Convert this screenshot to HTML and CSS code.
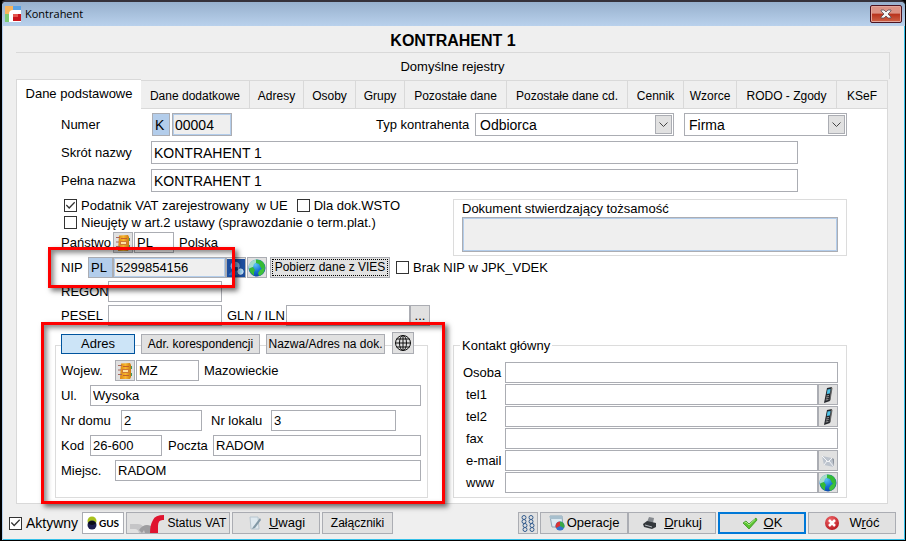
FILE: index.html
```html
<!DOCTYPE html>
<html lang="pl">
<head>
<meta charset="utf-8">
<title>Kontrahent</title>
<link rel="stylesheet" href="styles.css">
</head>
<body>
<svg class="defs" aria-hidden="true">
  <defs>
    <radialGradient id="sea" cx=".4" cy=".3" r=".8"><stop offset="0" stop-color="#5bc4f5"/><stop offset=".5" stop-color="#1673d8"/><stop offset="1" stop-color="#0a3a9c"/></radialGradient>
    <linearGradient id="book" x2="1" y2="0"><stop offset="0" stop-color="#d98412"/><stop offset=".5" stop-color="#f8b62e"/><stop offset="1" stop-color="#c97a12"/></linearGradient>
    <radialGradient id="red" cx=".4" cy=".3" r=".8"><stop offset="0" stop-color="#f0696b"/><stop offset="1" stop-color="#b30f18"/></radialGradient>
    <symbol id="globe" viewBox="0 0 18 18">
      <circle cx="9" cy="9" r="8.5" fill="url(#sea)"/>
      <path d="M.6 9Q.6 2 8 .6L9 3 6 5 5 8 2 10Z" fill="#a5dccb"/>
      <path d="M8 .6Q15 .6 17 7L15.500 11 13 9 11 5 8 4ZM2 9L5 8 7 11 6 13 6 16.500Q2 14 1 10Z" fill="#35bb35"/>
      <path d="M12 11L17 8Q17 15 11 17L10 14Z" fill="#3fc23a"/>
    </symbol>
    <symbol id="address-book" viewBox="0 0 16 18">
      <path d="M4 1.500L13 1 14 3V15L13 17H3Z" fill="url(#book)"/>
      <path d="M14.500 4V7M14.500 11V14" stroke="#3b9b62"/>
      <path d="M1 3.500H5M1 8H4M1 12.500H5" stroke="#a8665c"/>
      <rect x="5.500" y="7.500" width="6" height="3" fill="#ffe3a0" stroke="#cf7a35"/>
      <path d="M6 4.500H12M6 13.500H12" stroke="#c2602c"/>
    </symbol>
    <symbol id="phone" viewBox="0 0 14 18">
      <path d="M6 2L11 1 9 15 3 17Z" fill="#23262b"/>
      <path d="M10 1L11.500 2 9.500 14 8.500 15Z" fill="#666"/>
      <path d="M6.500 3.500L9.500 3 8.800 7.500 5.800 8Z" fill="#4ec3e8"/>
      <path d="M5.500 10L8 9.500M5 12L7.700 11.500M4.700 14L7.400 13.500" stroke="#9a9a9a"/>
    </symbol>
  </defs>
</svg>
<div class="window">
  <header class="titlebar">
    <svg class="logo" viewBox="0 0 16 16" aria-hidden="true"><path d="M0 0H8V8H0Z" fill="#f9b45c"/><path d="M8 0H16V5H8Z" fill="#5aa2e4"/><path d="M0 8H5V16H0Z" fill="#7ccb72"/><path d="M4 16V8Q4 4 8 4H16V7H9Q7 7 7 9V16Z" fill="#fff"/><path d="M7 7H16V16H7Z" fill="#fff"/><path d="M8 8H16V15H8Z" fill="#c9151b"/><path d="M8 8H13V11H8Z" fill="#e4564e"/></svg>
    <span class="window-name">Kontrahent</span>
    <button class="close" type="button" aria-label="Zamknij"><svg viewBox="0 0 12 10"><path d="M1 1H4L6 3 8 1H11V2L8 5 11 8V9H8L6 7 4 9H1V8L4 5 1 2Z" fill="#f5f5f5" stroke="#5c4b53" stroke-width=".8"/></svg></button>
  </header>
  <main class="content">
    <h1>KONTRAHENT 1</h1>
    <p class="registers">Domyślne rejestry</p>
    <nav class="tabs">
      <button type="button" class="tab active">Dane podstawowe</button>
      <button type="button" class="tab">Dane dodatkowe</button>
      <button type="button" class="tab">Adresy</button>
      <button type="button" class="tab">Osoby</button>
      <button type="button" class="tab">Grupy</button>
      <button type="button" class="tab">Pozostałe dane</button>
      <button type="button" class="tab">Pozostałe dane cd.</button>
      <button type="button" class="tab">Cennik</button>
      <button type="button" class="tab">Wzorce</button>
      <button type="button" class="tab">RODO - Zgody</button>
      <button type="button" class="tab">KSeF</button>
    </nav>
    <form class="panel">
      <div class="identity">
        <div class="row tall">
          <label class="wide-label" for="number">Numer</label>
          <input class="prefix letter" value="K" aria-label="Seria" readonly>
          <input class="locked number" id="number" value="00004" readonly>
          <label class="type-label" for="type">Typ kontrahenta</label>
          <span class="combo type"><select id="type"><option>Odbiorca</option></select><span class="arrow"><svg viewBox="0 0 9 6"><path d="M.5 .5L4.500 4.500 8.500 .5"/></svg></span></span>
          <span class="combo form"><select aria-label="Forma"><option>Firma</option></select><span class="arrow"><svg viewBox="0 0 9 6"><path d="M.5 .5L4.500 4.500 8.500 .5"/></svg></span></span>
        </div>
        <div class="row tall named"><label class="wide-label" for="short">Skrót nazwy</label><input class="grow" id="short" value="KONTRAHENT 1"></div>
        <div class="row tall named"><label class="wide-label" for="full">Pełna nazwa</label><input class="grow" id="full" value="KONTRAHENT 1"></div>
      </div>
      <div class="middle">
        <div class="flags">
          <div class="checks"><label class="check"><input type="checkbox" checked>Podatnik VAT zarejestrowany &nbsp;w UE</label><label class="check"><input type="checkbox">Dla dok.WSTO</label></div>
          <div class="checks"><label class="check"><input type="checkbox">Nieujęty w art.2 ustawy (sprawozdanie o term.plat.)</label></div>
          <div class="row country">
            <label class="country-label" for="country">Państwo</label>
            <button class="icon" type="button" aria-label="Wybierz państwo"><svg><use href="#address-book"/></svg></button>
            <input class="country-code" id="country" value="PL"><span>Polska</span>
          </div>
        </div>
        <div class="document"><label for="document">Dokument stwierdzający tożsamość</label><input class="locked" id="document" readonly></div>
      </div>
      <div class="codes">
        <div class="row nip">
          <label class="nip-label" for="nip">NIP</label>
          <input class="prefix nip-country" value="PL" aria-label="Prefiks NIP" readonly><input class="locked nip-number" id="nip" value="5299854156" readonly>
          <button class="icon" type="button" aria-label="Sprawdź"><svg viewBox="0 0 20 20"><path d="M0 0H20V20H0Z" fill="#1d4f9f"/><path d="M4 8Q4 3 9 3T14 8L13 11H5Z" fill="#89aede"/><path d="M6 9H12V13H6Z" fill="#173b7c"/><circle cx="15" cy="14" r="3" fill="#9ed4f3" stroke="#dceaf6"/><path d="M2 17L6 13H11L12 18H2Z" fill="#3771bd"/></svg></button>
          <button class="icon web" type="button" aria-label="Strona"><svg><use href="#globe"/></svg></button>
          <button class="vies" type="button"><span>Pobierz dane z VIES</span></button>
          <label class="check"><input type="checkbox">Brak NIP w JPK_VDEK</label>
          <span class="highlight highlight-nip"></span>
        </div>
        <div class="row"><label class="code-label" for="regon">REGON</label><input class="code" id="regon"></div>
        <div class="row"><label class="code-label" for="pesel">PESEL</label><input class="code" id="pesel"><label class="gln-label" for="gln">GLN / ILN</label><input class="gln" id="gln"><button class="icon dots" type="button">...</button></div>
      </div>
      <div class="groups">
        <section class="group address">
          <div class="address-tabs">
            <button class="current" type="button">Adres</button><button class="mail-tab" type="button">Adr. korespondencji</button><button class="name-tab" type="button">Nazwa/Adres na dok.</button>
            <button class="icon map" type="button" aria-label="Mapa"><svg viewBox="0 0 18 18" fill="none" stroke="#111"><circle cx="9" cy="9" r="7.500"/><ellipse cx="9" cy="9" rx="3.500" ry="7.500"/><path d="M9 1V17M1 9H17M2.500 5H15.500M2.500 13H15.500"/></svg></button>
          </div>
          <div class="row"><label class="voiv-label" for="voiv">Wojew.</label><button class="icon" type="button" aria-label="Wybierz województwo"><svg><use href="#address-book"/></svg></button><input class="voiv" id="voiv" value="MZ"><span>Mazowieckie</span></div>
          <div class="row"><label class="street-label" for="street">Ul.</label><input class="grow" id="street" value="Wysoka"></div>
          <div class="row"><label class="house-label" for="house">Nr domu</label><input class="house" id="house" value="2"><label class="flat-label" for="flat">Nr lokalu</label><input class="flat" id="flat" value="3"></div>
          <div class="row"><label class="street-label" for="zip">Kod</label><input class="zip" id="zip" value="26-600"><label class="post-label" for="post">Poczta</label><input class="grow" id="post" value="RADOM"></div>
          <div class="row"><label class="voiv-label" for="city">Miejsc.</label><input class="grow" id="city" value="RADOM"></div>
          <span class="highlight highlight-address"></span>
        </section>
        <fieldset class="group contact">
          <legend>Kontakt główny</legend>
          <div class="row"><label for="person">Osoba</label><input class="grow" id="person"></div>
          <div class="row"><label for="tel1">tel1</label><input class="grow" id="tel1"><button class="icon" type="button" aria-label="Zadzwoń tel1"><svg><use href="#phone"/></svg></button></div>
          <div class="row"><label for="tel2">tel2</label><input class="grow" id="tel2"><button class="icon" type="button" aria-label="Zadzwoń tel2"><svg><use href="#phone"/></svg></button></div>
          <div class="row"><label for="fax">fax</label><input class="grow" id="fax"></div>
          <div class="row"><label for="email">e-mail</label><input class="grow" id="email"><button class="icon" type="button" aria-label="Wyślij e-mail"><svg viewBox="0 0 18 18"><path d="M3 4L13 6 15 15 5 13Z" fill="#bcc3cd"/><path d="M3 4L9 10 13 6M5 13L8 9M15 15L10 9" fill="none" stroke="#f4f5f7"/><path d="M13 6L15 7V15Z" fill="#8e959f"/></svg></button></div>
          <div class="row"><label for="www">www</label><input class="grow" id="www"><button class="icon" type="button" aria-label="Otwórz stronę"><svg><use href="#globe"/></svg></button></div>
        </fieldset>
      </div>
    </form>
  </main>
  <footer class="actions">
    <label class="check active-flag"><input type="checkbox" checked>Aktywny</label>
    <button class="gus" type="button"><svg viewBox="0 0 10 14" aria-hidden="true"><circle cx="5" cy="5" r="4.500" fill="#a9c11c"/><circle cx="5" cy="9" r="4.500" fill="#1c1d4d"/><path d="M1 7Q5 3 9 7 5 11 1 7" fill="#0b0c16"/></svg>GUS</button>
    <button class="status" type="button"><svg viewBox="0 0 34 19" aria-hidden="true"><path d="M0 10H8Q14 10 16 19H9Q8 15 5 15H0Z" fill="#c5c5c7"/><path d="M9 16Q14 9 21 12V19H15L14 16 12 19Z" fill="#9d9da0"/><path d="M20 19Q20 11 23 6 25 1 34 1V6Q28 5 28 12V19Z" fill="#e0142f"/></svg>Status VAT</button>
    <button class="standard" type="button"><svg viewBox="0 0 16 16" aria-hidden="true"><path d="M3 2H11L12 14H4Z" fill="#dfe9ef" stroke="#b8c6cf"/><path d="M13 3L6 12 5 14 8 13 14 5Z" fill="#8299a6"/></svg><span><u>U</u>wagi</span></button>
    <button class="attachments" type="button">Załączniki</button>
    <span class="spacer"></span>
    <button class="icon links" type="button" aria-label="Powiązania"><svg viewBox="0 0 18 18" fill="none" stroke="#335c8e"><circle cx="5" cy="3.500" r="2"/><circle cx="5" cy="7.500" r="2"/><circle cx="12" cy="3.500" r="2"/><circle cx="12" cy="7.500" r="2"/><circle cx="6" cy="11.500" r="2"/><circle cx="6" cy="15.500" r="2"/><circle cx="13" cy="11.500" r="2"/><circle cx="13" cy="15.500" r="2"/></svg></button>
    <div class="joined">
      <button class="standard" type="button"><svg viewBox="0 0 16 16" aria-hidden="true"><path d="M1 1H13L14 12H3Z" fill="#dce9f1" stroke="#8da8b8"/><path d="M1 1H13V4H1Z" fill="#a7bfcd"/><circle cx="11" cy="11" r="4.500" fill="#3574cc"/><path d="M11 11V6.500A4.500 4.500 0 0 0 7 13Z" fill="#d93434"/><path d="M11 11V6.500A4.500 4.500 0 0 1 15 13Z" fill="#39a844"/></svg>Operacje</button><button class="standard print" type="button"><svg viewBox="0 0 16 16" aria-hidden="true"><path d="M7 2L12 3 11 8 5 7Z" fill="#85898e"/><path d="M1 9L5 6 14 8 14 12 10 14 2 12Z" fill="#34383c"/><path d="M3 10L10 12" stroke="#b6bbc0"/></svg><span><u>D</u>rukuj</span></button>
    </div>
    <button class="standard ok" type="button"><svg viewBox="0 0 16 16" aria-hidden="true"><path d="M1 8L4 6 7 9 14 3 15 5 7 14Z" fill="#5ac32f" stroke="#389321" stroke-width=".8"/><path d="M2.500 8L4 7 7 10 13 4.500" fill="none" stroke="#a8e985"/></svg><span><u>O</u>K</span></button>
    <button class="standard back" type="button"><svg viewBox="0 0 16 16" aria-hidden="true"><circle cx="8" cy="8" r="7" fill="url(#red)"/><path d="M5 5L11 11M11 5L5 11" stroke="#fff" stroke-width="2.500"/></svg><span>W<u>r</u>óć</span></button>
  </footer>
</div>
</body>
</html>
```
FILE: styles.css
```css
* { box-sizing: border-box; }
body { margin: 0; background: #000; font: 13px/16px "Liberation Sans", Arial, sans-serif; color: #000; }
.defs { position: absolute; width: 0; height: 0; }
svg { display: block; flex: none; }
input, select, button { font: inherit; color: inherit; margin: 0; border-radius: 0; min-width: 0; }
.window {
  min-height: 100vh; display: flex; flex-direction: column;
  border: 1px solid #000; border-width: 2px 1px 1px 2px; border-top-color: #35313a;
  border-radius: 6px 6px 0 0; background: #efefef;
  box-shadow: inset 1px 0 #b4cfec, inset -1px -1px #35c0e8;
}
.titlebar {
  height: 24px; display: flex; align-items: center; gap: 4px; padding: 0 3px 0 3px;
  background: linear-gradient(#97b0cd, #b9d1ec); border-radius: 4px 4px 0 0;
  font: 11px/16px "Open Sans", "Noto Sans", sans-serif;
}
.logo { width: 16px; height: 16px; }
.window-name { flex: 1; }
.close {
  width: 32px; height: 18px; padding: 0; display: grid; place-items: center;
  border: 1px solid #4c1320; border-radius: 2px; box-shadow: inset 0 0 0 1px #e3a69b;
  background: linear-gradient(#dc9284 45%, #b8321c 50%, #ce6347);
}
.close svg { width: 12px; height: 10px; }

.content { padding: 0 15px 0 14px; }
h1 { margin: 0; height: 26px; font-size: 16px; line-height: 29px; text-align: center; }
.registers { margin: 0; height: 27px; border-top: 1px solid #d9d9d9; border-right: 1px solid #d9d9d9; text-align: center; line-height: 28px; }
.tabs {
  display: grid; margin-right: 2px; align-items: end;
  grid-template-columns: 125fr 109fr 54fr 52fr 49fr 102fr 121fr 56fr 53fr 100fr 51fr;
}
.tab {
  height: 28px; padding: 2px 0 0; white-space: nowrap; background: #efefef; text-align: center;
  border: solid #d9d9d9; border-width: 1px 1px 0 0; font-size: 12px;
}
.tab.active {
  position: relative; z-index: 1; height: 30px; margin-bottom: -1px; padding: 0 0 2px;
  background: #fff; border-width: 1px 0 0 1px; font-size: 13px;
}
.panel { margin-right: 2px; padding: 4px 40px 5px 38px; background: #fff; border: 1px solid #d9d9d9; }

.row { display: flex; align-items: center; height: 21px; white-space: nowrap; }
.row > * { flex: none; }
.row > input, .row > .icon { height: 21px; }
.row > .grow { flex: 1; width: 0; }
input { border: 1px solid #abadb3; background: #fff; padding: 0 2px; outline: 0; }
input.prefix { background: #b3cdeb; }
input.locked { background: #efefef; box-shadow: inset 0 0 0 1px #b3cdeb; }
.row.tall, .row.tall > input { height: 23px; }
.identity { display: grid; gap: 5px; padding-left: 6px; }
.identity input { font-size: 14px; }
.wide-label { width: 90px; }
.letter { width: 18px; margin-left: 1px; }
.number { width: 60px; margin-left: 2px; }
.type-label { width: 99px; margin-left: auto; }
.combo { position: relative; }
.combo select { width: 100%; height: 23px; appearance: none; padding: 0 4px; border: 1px solid #abadb3; background: #fff; font-size: 14px; }
.combo.type { width: 199px; margin-right: 10px; }
.combo.form { width: 163px; }
.arrow { position: absolute; top: 2px; right: 2px; width: 17px; height: 19px; display: grid; place-items: center; border: 1px solid #abadb3; background: #e1e1e1; pointer-events: none; }
.arrow svg { width: 9px; height: 6px; fill: none; stroke: #444; }
.named { padding-right: 49px; }

.middle { display: flex; justify-content: space-between; margin-top: 5px; }
.flags { padding-left: 6px; }
.checks { display: flex; gap: 9px; height: 17px; padding-left: 3px; }
.check { display: flex; align-items: center; gap: 4px; white-space: nowrap; }
.check input { appearance: none; width: 13px; height: 13px; padding: 0; border: 1px solid #333; display: grid; }
.check input:checked::before { content: ""; background: #333; clip-path: polygon(8% 50%, 16% 42%, 38% 64%, 84% 16%, 92% 25%, 38% 82%); }
.country { margin-top: 1px; }
.country-label { width: 52px; }
.country-code { width: 40px; margin: 0 5px 0 1px; }
.document { width: 394px; height: 57px; margin-top: 2px; padding: 1px 8px 3px; border: 1px solid #dcdcdc; display: grid; }
.document input { height: 35px; width: 100%; }

.icon { width: 20px; padding: 0; display: grid; place-items: center; border: 1px solid #abadb3; background: #e1e1e1; }
.icon svg { width: 18px; height: 18px; }
.codes { display: grid; gap: 3px; padding-left: 6px; margin-top: 1px; }
.nip { position: relative; }
.nip-label { width: 27px; }
.nip-country { width: 25px; }
.nip-number { width: 113px; }
.nip .web { margin: 0 3px 0 1px; }
.vies { width: 120px; height: 21px; padding: 1px; border: 1px solid #abadb3; background: #e1e1e1; margin-right: 6px; font-size: 12px; }
.vies span { display: block; border: 1px dotted #000; line-height: 15px; }
.code-label { width: 47px; }
.code { width: 114px; }
.gln-label { width: 59px; margin-left: 5px; }
.gln { width: 124px; }
.highlight { position: absolute; z-index: 2; border: 3px solid #fe0000; pointer-events: none; box-shadow: 3px 3px 5px rgba(0, 0, 0, .55), inset 3px 3px 5px rgba(0, 0, 0, .45); }
.highlight-nip { left: -13px; top: -10px; width: 187px; height: 41px; }

.groups { display: grid; grid-template-columns: 373fr 394fr; gap: 25px; margin-top: 19px; }
.group { border: 1px solid #dcdcdc; height: 153px; }
.address { position: relative; padding: 0 6px 0 5px; display: grid; align-content: start; gap: 4px; }
.highlight-address { inset: -24px -18px -7px -15px; }
.address-tabs { display: flex; align-items: end; height: 22px; margin-top: -14px; margin-bottom: 2px; }
.address-tabs button { height: 20px; padding: 0; border: 1px solid #abadb3; background: #e1e1e1; white-space: nowrap; flex: none; font-size: 12px; }
.address-tabs .current { width: 74px; border-color: #00549e; background: #cce4f7; margin-right: 6px; font-size: 13px; }
.address-tabs .mail-tab { width: 119px; margin-right: 6px; }
.address-tabs .name-tab { width: 119px; margin-right: 7px; }
.address-tabs .map { width: 22px; height: 22px; }
.voiv-label { width: 54px; }
.voiv { width: 63px; margin: 0 5px 0 1px; }
.street-label { width: 29px; }
.house-label { width: 60px; }
.house { width: 81px; }
.flat-label { width: 60px; margin-left: 9px; }
.flat { width: 125px; }
.zip { width: 72px; }
.post-label { width: 45px; margin-left: 6px; }

.contact { margin: -9px 0 0; height: 162px; padding: 0 8px; min-width: 0; display: grid; align-content: start; gap: 1px; }
legend { padding: 0 2px; height: 18px; line-height: 20px; margin-left: -2px; margin-bottom: 8px; }
.contact label { width: 43px; padding-left: 4px; }
.contact .row:first-of-type label { padding-left: 1px; }

.actions { display: flex; align-items: center; height: 34px; margin-top: auto; padding: 0 9px 0 7px; gap: 2px; white-space: nowrap; }
.actions button { height: 22px; padding: 0; border: 1px solid #abadb3; background: #e1e1e1; display: flex; align-items: center; justify-content: center; flex: none; }
.actions .active-flag { width: 71px; font-size: 14px; }
.actions .gus { width: 42px; background: #fff; gap: 2px; font: bold 10px/16px Lato, sans-serif; }
.gus svg { width: 10px; height: 14px; }
.actions .status { width: 104px; gap: 4px; font-size: 12px; }
.status svg { width: 34px; height: 19px; }
.actions .standard { width: 88px; gap: 6px; }
.standard svg { width: 16px; height: 16px; }
.actions .joined .standard:first-child { gap: 2px; }
.actions .attachments { width: 71px; font-size: 12px; }
.spacer { flex: 1; }
.actions .links { width: 20px; }
.joined { display: flex; }
.actions .ok { border: 2px solid #0078d7; }
.actions .back { gap: 9px; }
```
